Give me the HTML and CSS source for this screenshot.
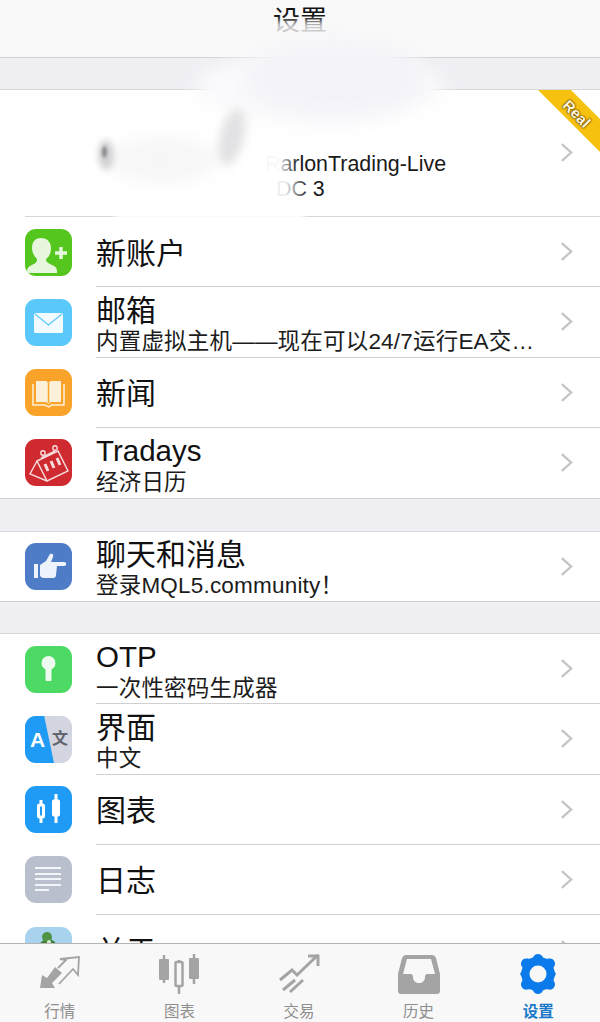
FILE: index.html
```html
<!DOCTYPE html>
<html lang="zh">
<head>
    <meta charset="UTF-8">
    <title>设置</title>
    <link rel="stylesheet" href="styles.css">
</head>
<body>
    <div class="screen">
        <header class="top-bar">设置</header>

        <main class="content">
            <div class="band band-first"></div>

            <section class="group">
                <div class="account">
                    <div class="account-text">
                        <div>RarlonTrading-Live</div>
                        <div class="account-sub">DC 3</div>
                    </div>
                    <svg class="chevron" viewBox="0 0 14 22"><path d="M2 2l10 9-10 9"/></svg>
                    <svg class="ribbon" viewBox="0 0 63 63"><polygon points="1,0 34,0 63,29 63,62"/></svg>
                    <span class="ribbon-label">Real</span>
                </div>

                <div class="row">
                    <div class="icon icon-green">
                        <svg viewBox="0 0 47 47"><path d="M16 9c6 0 10 4 10 10 0 5-2 9-5 11 0 3 2 4 6 6 3 1 5 3 5 6v2H2v-2c0-3 2-5 5-6 4-2 5-3 5-6-2-2-5-6-5-11 0-6 3-10 9-10z" fill="#e6f7de"/><path d="M30 24h12M36 18v12" stroke="#e6f7de" stroke-width="3.500"/></svg>
                    </div>
                    <div class="row-body">
                        <div class="row-text"><div class="title">新账户</div></div>
                        <svg class="chevron" viewBox="0 0 14 22"><path d="M2 2l10 9-10 9"/></svg>
                    </div>
                </div>

                <div class="row">
                    <div class="icon icon-sky">
                        <svg viewBox="0 0 47 47"><rect x="9" y="14" width="29" height="20" rx="1.500" fill="#f2fbff"/><path d="M10 15l13.500 11L37 15" fill="none" stroke="#5ac8fa" stroke-width="1.200"/></svg>
                    </div>
                    <div class="row-body">
                        <div class="row-text">
                            <div class="title">邮箱</div>
                            <div class="sub">内置虚拟主机——现在可以24/7运行EA交…</div>
                        </div>
                        <svg class="chevron" viewBox="0 0 14 22"><path d="M2 2l10 9-10 9"/></svg>
                    </div>
                </div>

                <div class="row">
                    <div class="icon icon-orange">
                        <svg viewBox="0 0 47 47"><path d="M11 12h10l2.500 2 2.500-2h10v21H26l-2.500 2-2.500-2H11z" fill="#fdf0d8"/><path d="M8 15v21h12l3.500 2 3.500-2h12V15" fill="none" stroke="#fdf0d8" stroke-width="1.500"/><path d="M23.500 14v20" stroke="#f9a32b" stroke-width="1.500"/></svg>
                    </div>
                    <div class="row-body">
                        <div class="row-text"><div class="title">新闻</div></div>
                        <svg class="chevron" viewBox="0 0 14 22"><path d="M2 2l10 9-10 9"/></svg>
                    </div>
                </div>

                <div class="row row-last">
                    <div class="icon icon-red">
                        <svg viewBox="0 0 47 47" fill="none" stroke="#f8dcdc" stroke-width="1.400"><path d="M12 22l21-10 10 20-21 10z"/><path d="M12 22L5 35l17 7"/><path d="M16 19l14-7"/><circle cx="18" cy="14" r="2.200"/><circle cx="30" cy="9" r="2.200"/><path d="M20 25l3 7M26 22l3 7M32 19l3 7" stroke-width="3"/></svg>
                    </div>
                    <div class="row-body">
                        <div class="row-text">
                            <div class="title title-latin">Tradays</div>
                            <div class="sub">经济日历</div>
                        </div>
                        <svg class="chevron" viewBox="0 0 14 22"><path d="M2 2l10 9-10 9"/></svg>
                    </div>
                </div>
            </section>

            <div class="band"></div>

            <section class="group group-single">
                <div class="row row-last">
                    <div class="icon icon-indigo">
                        <svg viewBox="0 0 47 47" fill="#eef3fb"><rect x="9" y="21" width="4" height="14"/><path d="M15 22l6-4 4-7c2-1 4 0 3 3l-2 5h13c3 0 3 4 0 4h-7l-1 9c0 2-1 3-3 3H19c-2 0-4-1-4-3z"/></svg>
                    </div>
                    <div class="row-body">
                        <div class="row-text">
                            <div class="title">聊天和消息</div>
                            <div class="sub">登录MQL5.community！</div>
                        </div>
                        <svg class="chevron" viewBox="0 0 14 22"><path d="M2 2l10 9-10 9"/></svg>
                    </div>
                </div>
            </section>

            <div class="band band-short"></div>

            <section class="group">
                <div class="row">
                    <div class="icon icon-lime">
                        <svg viewBox="0 0 47 47" fill="#eefcf0"><circle cx="23.500" cy="17" r="7"/><rect x="20.500" y="18" width="6" height="17" rx="1"/></svg>
                    </div>
                    <div class="row-body">
                        <div class="row-text">
                            <div class="title title-latin">OTP</div>
                            <div class="sub">一次性密码生成器</div>
                        </div>
                        <svg class="chevron" viewBox="0 0 14 22"><path d="M2 2l10 9-10 9"/></svg>
                    </div>
                </div>

                <div class="row">
                    <div class="icon icon-lang">
                        <div class="lang-blue"></div>
                        <span class="lang-a">A</span>
                        <span class="lang-zh">文</span>
                    </div>
                    <div class="row-body">
                        <div class="row-text">
                            <div class="title">界面</div>
                            <div class="sub">中文</div>
                        </div>
                        <svg class="chevron" viewBox="0 0 14 22"><path d="M2 2l10 9-10 9"/></svg>
                    </div>
                </div>

                <div class="row">
                    <div class="icon icon-blue">
                        <svg viewBox="0 0 47 47" fill="none" stroke="#fff"><path d="M16 14v5M16 31v6M31 8v7M31 29v8" stroke-width="3"/><rect x="13.500" y="19" width="5" height="12" rx="1" stroke-width="3"/><rect x="27.500" y="14" width="7" height="16" rx="1" fill="#fff" stroke-width="1"/></svg>
                    </div>
                    <div class="row-body">
                        <div class="row-text"><div class="title">图表</div></div>
                        <svg class="chevron" viewBox="0 0 14 22"><path d="M2 2l10 9-10 9"/></svg>
                    </div>
                </div>

                <div class="row">
                    <div class="icon icon-slate">
                        <svg viewBox="0 0 47 47" stroke="#f4f5f8" stroke-width="2"><path d="M10 12h26M10 18h26M10 23h26M10 29h26M10 34h14"/></svg>
                    </div>
                    <div class="row-body">
                        <div class="row-text"><div class="title">日志</div></div>
                        <svg class="chevron" viewBox="0 0 14 22"><path d="M2 2l10 9-10 9"/></svg>
                    </div>
                </div>

                <div class="row">
                    <div class="icon icon-pale">
                        <svg viewBox="0 0 47 47"><ellipse cx="23" cy="26" rx="11" ry="14" fill="#3f7f38"/><circle cx="22" cy="10" r="5" fill="#4f9445"/><circle cx="24" cy="15" r="2" fill="#d8ecd0"/></svg>
                    </div>
                    <div class="row-body">
                        <div class="row-text"><div class="title">关于</div></div>
                        <svg class="chevron" viewBox="0 0 14 22"><path d="M2 2l10 9-10 9"/></svg>
                    </div>
                </div>
            </section>
        </main>

        <nav class="tab-bar">
            <div class="tab">
                <svg viewBox="0 0 42 40"><path d="M1 34l2-13 5 3 8-11 7 6-10 10 3 5z" fill="#a4a4a4"/><path d="M19 14l8-8-6-1 19-2-1 18-5-6-14 15" fill="none" stroke="#a4a4a4" stroke-width="1.800"/></svg>
                <span>行情</span>
            </div>
            <div class="tab">
                <svg viewBox="0 0 42 40" fill="none" stroke="#a4a4a4"><path d="M6 1v28M21 6v34M36 0v30" stroke-width="2.500"/><rect x="1" y="5" width="10" height="21" rx="1" fill="#a4a4a4" stroke="none"/><rect x="17.500" y="8" width="7" height="24" rx="1" fill="#f8f8f8" stroke-width="2.500"/><rect x="31" y="4" width="10" height="21" rx="1" fill="#a4a4a4" stroke="none"/></svg>
                <span>图表</span>
            </div>
            <div class="tab">
                <svg viewBox="0 0 42 40" fill="none" stroke="#a4a4a4" stroke-width="3"><path d="M2 26l12-10 5 5L40 1"/><path d="M30 2h10v10"/><path d="M5 36l12-10M12 38l13-12"/></svg>
                <span>交易</span>
            </div>
            <div class="tab">
                <svg viewBox="0 0 42 40"><path d="M8 1h26c2 0 3 1 4 3l4 16v17c0 2-1 3-3 3H3c-2 0-3-1-3-3V20L4 4c1-2 2-3 4-3z" fill="#a4a4a4"/><path d="M9 5h24l4 15h-8c-1 0-2 1-2 3 0 4-3 6-6 6s-6-2-6-6c0-2-1-3-2-3H5z" fill="#f8f8f8"/></svg>
                <span>历史</span>
            </div>
            <div class="tab tab-active">
                <svg viewBox="0 0 40 40"><path d="M20 0c2.500 0 4 1.500 5 3.500 2 1 3.500 1.500 5.500 1 3-.5 5 .500 6 3 1 2 .5 4-1 6 .5 2 1 4.500 2.500 6.500-1.500 2-2 4.500-2.500 6.500 1.500 2 2 4 1 6-1 2.500-3 3.500-6 3-2-.5-3.500 0-5.500 1-1 2-2.500 3.500-5 3.500s-4-1.500-5-3.500c-2-1-3.500-1.500-5.500-1-3 .5-5-.5-6-3-1-2-.5-4 1-6C4 24.500 3.500 22 2 20c1.500-2 2-4.500 2.500-6.500-1.500-2-2-4-1-6 1-2.500 3-3.500 6-3 2 .5 3.500 0 5.500-1C16 1.500 17.500 0 20 0z" fill="#0b7bec"/><circle cx="20" cy="20" r="8.500" fill="#f8f8f8"/></svg>
                <span>设置</span>
            </div>
        </nav>

        <!-- smudges painted over the screenshot -->
        <div class="smudge smudge-title"></div>
        <div class="smudge smudge-wide"></div>
        <div class="smudge smudge-lilac"></div>
        <div class="smudge smudge-line"></div>
        <div class="smudge smudge-grey-c"></div>
        <div class="smudge smudge-grey-a"></div>
        <div class="smudge smudge-grey-b"></div>
        <div class="smudge smudge-grey-d"></div>
        <div class="smudge smudge-text"></div>
        <div class="smudge smudge-account"></div>
    </div>
</body>
</html>
```

FILE: styles.css
```css
/* Basic styles */
* {
    box-sizing: border-box;
}
body {
    margin: 0;
    font-family: "Liberation Sans", "Noto Sans CJK SC", sans-serif;
    color: #111;
    background: #fff;
}
.screen {
    position: relative;
    width: 600px;
    height: 1022px;
    display: flex;
    flex-direction: column;
    overflow: hidden;
}
.top-bar {
    height: 58px;
    flex-shrink: 0;
    padding-top: 6px;
    background: #f9f9fa;
    border-bottom: 1px solid #cfcfd4;
    text-align: center;
    font-size: 27px;
    line-height: 30px;
}
.content {
    flex: 1;
    min-height: 0;
    overflow: hidden;
}
.band {
    height: 32px;
    background: #efeff4;
}
.band-first {
    height: 31px;
}
.band-short {
    height: 31.5px;
}
.group {
    background: #fff;
    border-top: 1px solid #d8d8dc;
    border-bottom: 1px solid #d0d0d4;
}

/* Account row */
.account {
    position: relative;
    height: 127px;
    margin-left: 25px;
    padding-left: 240px;
    padding-right: 27px;
    display: flex;
    align-items: flex-start;
    justify-content: space-between;
    border-bottom: 1px solid #d6d6da;
}
.account-text {
    padding-top: 62px;
    font-size: 21.4px;
    line-height: 25px;
    color: #1a1a1a;
}
.account-sub {
    padding-left: 11px;
}
.account .chevron {
    margin-top: 52px;
}
.ribbon {
    position: absolute;
    top: 0;
    right: 0;
    width: 63px;
    height: 63px;
    fill: #f6c20f;
}
.ribbon-label {
    position: absolute;
    top: 15px;
    right: 7px;
    transform: rotate(45deg);
    font-size: 15px;
    font-weight: bold;
    color: #fff6dc;
    text-shadow: 0 0 2px #6b4800, 0 0 2px #6b4800, 0 0 1px #6b4800;
}

/* List rows */
.row {
    height: 70.25px;
    padding-left: 25px;
    display: flex;
    align-items: center;
}
.group-single .row {
    height: 68.5px;
}
.row-body {
    height: 100%;
    flex: 1;
    margin-left: 24px;
    padding-right: 27px;
    display: flex;
    align-items: center;
    justify-content: space-between;
    border-bottom: 1px solid #d0d0d4;
}
.row-last .row-body {
    border-bottom: none;
}
.row-text {
    padding-top: 4px;
    white-space: nowrap;
}
.title {
    font-size: 30px;
    line-height: 36px;
    color: #111;
}
.title-latin {
    font-size: 29.5px;
    line-height: 33px;
    margin-bottom: 3px;
}
.sub {
    font-size: 22.5px;
    line-height: 26px;
    letter-spacing: 0.2px;
    color: #1c1c1c;
}
.chevron {
    width: 13px;
    height: 21px;
    flex-shrink: 0;
    fill: none;
    stroke: #c4c4c8;
    stroke-width: 2.5;
}

/* Row icons */
.icon {
    position: relative;
    width: 47px;
    height: 47px;
    flex-shrink: 0;
    border-radius: 11px;
    overflow: hidden;
}
.icon svg {
    display: block;
    width: 100%;
    height: 100%;
}
.icon-green { background: #55c61e; }
.icon-sky { background: #5ac8fa; }
.icon-orange { background: #f9a32b; }
.icon-red { background: #cf2a30; }
.icon-indigo { background: #4f7cc7; }
.icon-lime { background: #4cd964; }
.icon-blue { background: #1f9bf6; }
.icon-slate { background: #b9bfcc; }
.icon-pale { background: #a7d3ef; }
.icon-lang { background: #d3d6e0; }
.lang-blue {
    position: absolute;
    top: 0;
    left: 0;
    bottom: 0;
    width: 29px;
    background: #1f9bf6;
    clip-path: polygon(0 0, 66% 0, 100% 100%, 0 100%);
}
.lang-a {
    position: absolute;
    left: 5px;
    top: 11px;
    font-size: 21px;
    line-height: 25px;
    font-weight: bold;
    color: #fff;
}
.lang-zh {
    position: absolute;
    left: 27px;
    top: 13px;
    font-size: 16px;
    line-height: 20px;
    font-weight: bold;
    color: #62656e;
}

/* Tab bar */
.tab-bar {
    height: 79px;
    flex-shrink: 0;
    padding-right: 2px;
    display: flex;
    background: #f8f8f8;
    border-top: 1px solid #b4b4b4;
}
.tab {
    flex: 1;
    padding-top: 10px;
    display: flex;
    flex-direction: column;
    align-items: center;
    font-size: 15.5px;
    line-height: 20px;
    color: #8e8e8e;
}
.tab svg {
    width: 42px;
    height: 40px;
    margin-bottom: 8px;
}
.tab-active {
    color: #1a78c8;
    font-weight: bold;
}

/* Smudges */
.smudge {
    position: absolute;
    pointer-events: none;
}
.smudge-title {
    left: 262px;
    top: 21px;
    width: 76px;
    height: 18px;
    background: #f9f9fa;
    opacity: 0.8;
    filter: blur(3px);
}
.smudge-wide {
    left: 195px;
    top: 50px;
    width: 250px;
    height: 76px;
    border-radius: 50%;
    background: #fafafc;
    filter: blur(9px);
}
.smudge-lilac {
    left: 245px;
    top: 44px;
    width: 180px;
    height: 70px;
    border-radius: 50%;
    background: #f2f2f8;
    filter: blur(9px);
}
.smudge-line {
    left: 115px;
    top: 212px;
    width: 190px;
    height: 10px;
    background: #fff;
    filter: blur(3px);
}
.smudge-grey-a {
    left: 220px;
    top: 108px;
    width: 24px;
    height: 58px;
    border-radius: 50%;
    transform: rotate(14deg);
    background: #e2e2e4;
    filter: blur(5px);
}
.smudge-grey-b {
    left: 98px;
    top: 140px;
    width: 16px;
    height: 30px;
    border-radius: 50%;
    background: #d2d2d4;
    filter: blur(3px);
}
.smudge-grey-d {
    left: 102px;
    top: 146px;
    width: 5px;
    height: 12px;
    border-radius: 50%;
    background: #8a8a8c;
    filter: blur(1.5px);
}
.smudge-grey-c {
    left: 108px;
    top: 136px;
    width: 110px;
    height: 48px;
    border-radius: 50%;
    background: #f7f7f7;
    filter: blur(8px);
}
.smudge-text {
    left: 262px;
    top: 152px;
    width: 36px;
    height: 26px;
    background: linear-gradient(to right, rgba(255, 255, 255, 0.97) 45%, rgba(255, 255, 255, 0));
}
.smudge-account {
    left: 272px;
    top: 178px;
    width: 34px;
    height: 24px;
    background: linear-gradient(to right, rgba(255, 255, 255, 0.92) 40%, rgba(255, 255, 255, 0.1));
}
```
